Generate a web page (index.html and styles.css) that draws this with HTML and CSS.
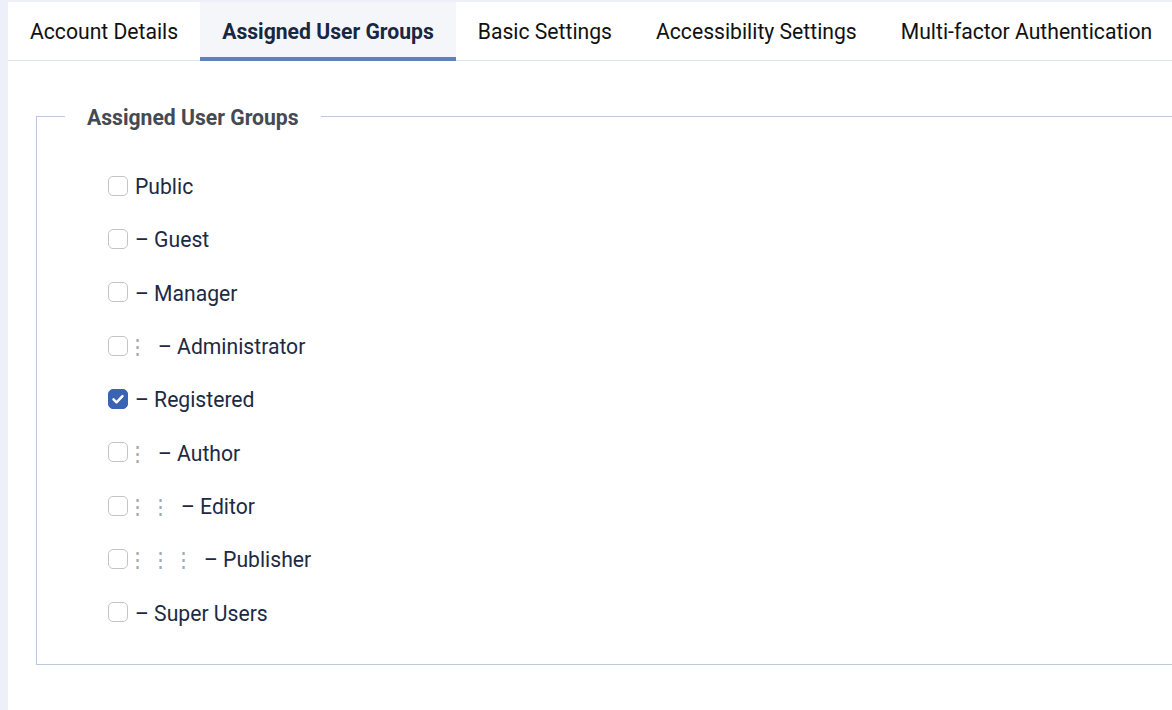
FILE: index.html
```html
<!DOCTYPE html>
<html>
<head>
<meta charset="utf-8">
<link rel="stylesheet" href="styles.css">
</head>
<body>
<div class="panel">
  <div class="tabs">
    <div class="tab">Account Details</div>
    <div class="tab active">Assigned User Groups</div>
    <div class="tab">Basic Settings</div>
    <div class="tab">Accessibility Settings</div>
    <div class="tab">Multi-factor Authentication</div>
  </div>
  <div class="content">
    <fieldset class="groups">
      <legend>Assigned User Groups</legend>
      <ul class="list">
        <li class="row"><span class="cb"></span><span class="lbl">Public</span></li>
        <li class="row"><span class="cb"></span><span class="lbl">– Guest</span></li>
        <li class="row"><span class="cb"></span><span class="lbl">– Manager</span></li>
        <li class="row"><span class="cb"></span><span class="gi">⋮</span><span class="lbl">– Administrator</span></li>
        <li class="row"><span class="cb checked"><svg viewBox="0 0 20 20" width="20" height="20"><path d="M5.5 10.3l3 3 6-6.2" fill="none" stroke="#fff" stroke-width="2.4" stroke-linecap="round" stroke-linejoin="round"/></svg></span><span class="lbl">– Registered</span></li>
        <li class="row"><span class="cb"></span><span class="gi">⋮</span><span class="lbl">– Author</span></li>
        <li class="row"><span class="cb"></span><span class="gi">⋮</span><span class="gi">⋮</span><span class="lbl">– Editor</span></li>
        <li class="row"><span class="cb"></span><span class="gi">⋮</span><span class="gi">⋮</span><span class="gi">⋮</span><span class="lbl">– Publisher</span></li>
        <li class="row"><span class="cb"></span><span class="lbl">– Super Users</span></li>
      </ul>
    </fieldset>
  </div>
</div>
</body>
</html>
```
FILE: styles.css
```css
html, body {
  margin: 0;
  padding: 0;
}
body {
  background: #edf0f8;
  font-family: Roboto, "Liberation Sans", sans-serif;
  overflow: hidden;
  height: 710px;
}
.panel {
  margin: 2px 0 0 8px;
  background: #fff;
  height: 708px;
}
.tabs {
  display: flex;
  height: 58px;
  border-bottom: 1px solid #dfe3ef;
  box-sizing: content-box;
}
.tab {
  padding: 2px 22px 0;
  font-size: 21.15px;
  line-height: 56px;
  color: #111;
  white-space: nowrap;
  box-sizing: border-box;
}
.tab.active {
  background: #f5f6fa;
  font-weight: 700;
  color: #1a2740;
  border-bottom: 4px solid #5d82c2;
  line-height: 51px;
  height: 59px;
  margin-bottom: -1px;
  padding-top: 4px;
}
.content {
  padding: 41px 0 0 28px;
}
.groups {
  margin: 0 -40px 0 0;
  border: 1px solid #bcc8db;
  padding: 29px 0 25px 28px;
  min-width: 0;
}
.groups legend {
  padding: 4px 22px 0;
  font-size: 21.15px;
  line-height: 24px;
  font-weight: 700;
  color: #444a52;
}
.list {
  list-style: none;
  margin: 0 0 0 43px;
  padding: 0;
}
.row {
  display: flex;
  align-items: center;
  height: 53.33px;
  font-size: 21.15px;
  color: #1d2a44;
}
.cb {
  width: 20px;
  height: 20px;
  box-sizing: border-box;
  border: 1px solid #c2c4c8;
  border-radius: 5px;
  margin-right: 7px;
  flex: none;
  background: #fff;
}
.cb.checked {
  background: #3b63b4;
  border-color: #3b63b4;
  display: flex;
}
.cb.checked svg {
  margin: -1px;
}
.gi {
  display: inline-block;
  width: 23px;
  color: #a6a9ae;
  text-indent: -8px;
  padding-top: 2px;
}
.lbl {
  white-space: nowrap;
  padding-top: 2px;
}
```
